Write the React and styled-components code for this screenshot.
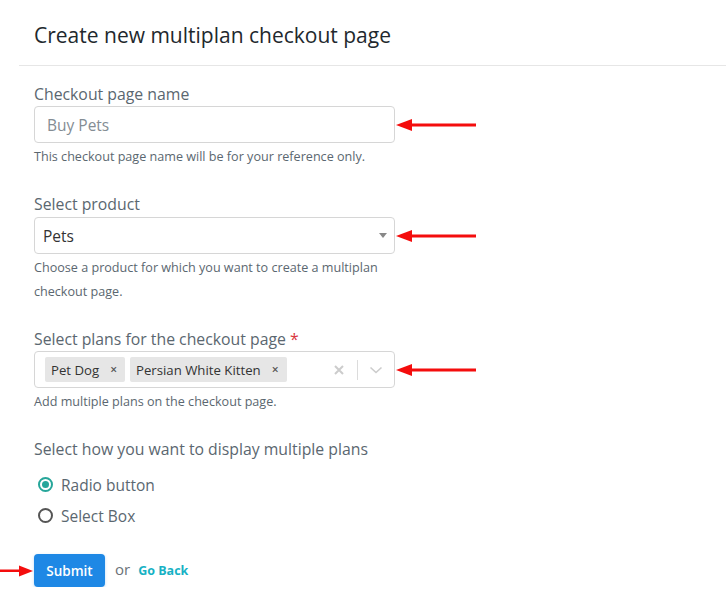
import React from 'react';
import styled, { createGlobalStyle } from 'styled-components';

const GlobalStyle = createGlobalStyle`
    body {
        margin: 0;
        background: #fff;
        font-family: 'Open Sans', 'Liberation Sans', sans-serif;
    }
`;

const Card = styled.div`
    margin-left: 19px;
    width: 707px;
`;

const Header = styled.div`
    padding: 21px 15px 16px;
    border-bottom: 1px solid #e6e6e6;
`;

const Title = styled.h2`
    margin: 0;
    font-size: 21px;
    line-height: 28px;
    font-weight: 400;
    color: #22282d;
`;

const Body = styled.div`
    padding: 17px 15px 0;
`;

const Group = styled.div`
    margin-bottom: ${(p) => p.$gap ?? 24}px;
`;

const Label = styled.div`
    font-size: 15.8px;
    line-height: 22px;
    color: #5b6770;
    margin-bottom: ${(p) => p.$mb ?? 1}px;
`;

const Star = styled.span`
    color: #d9363e;
`;

const Row = styled.div`
    display: flex;
    align-items: center;
    gap: 1px;
`;

const Input = styled.div`
    box-sizing: border-box;
    width: 361px;
    height: 37px;
    border: 1px solid #d6d6d6;
    border-radius: 4px;
    display: flex;
    align-items: center;
    padding: 0 12px 0 ${(p) => (p.$placeholder ? 12 : 8)}px;
    font-size: 15.5px;
    color: ${(p) => (p.$placeholder ? '#848d94' : '#333')};
`;

const Caret = styled.span`
    margin-left: auto;
    width: 0;
    height: 0;
    border-left: 4px solid transparent;
    border-right: 4px solid transparent;
    border-top: 5px solid #888;
    margin-right: -5px;
`;

const Help = styled.div`
    margin-top: 2px;
    font-size: 12.6px;
    line-height: 24px;
    color: #5b6770;
    max-width: 361px;
`;

const MultiBox = styled.div`
    box-sizing: border-box;
    width: 361px;
    height: 37px;
    border: 1px solid #d6d6d6;
    border-radius: 4px;
    display: flex;
    align-items: center;
    padding: 0 0 0 10px;
`;

const Tags = styled.div`
    display: flex;
    gap: 5px;
    flex: 1;
`;

const Tag = styled.div`
    display: flex;
    align-items: center;
    height: 25px;
    background: #e6e6e6;
    border-radius: 2px;
    font-size: 13.2px;
    color: #333;
    padding: 0 8px 0 6px;
    gap: 11px;
`;

const TagX = styled.span`
    font-size: 12px;
    color: #555;
    font-weight: 600;
`;

const Indicators = styled.div`
    display: flex;
    align-items: center;
    height: 100%;
`;

const IndicatorIcon = styled.div`
    width: 36px;
    display: flex;
    justify-content: center;
    align-items: center;
`;

const Separator = styled.span`
    width: 1px;
    height: 20px;
    background: #dcdcdc;
`;

const Radios = styled.div`
    margin-top: 9px;
    padding-left: 4px;
`;

const RadioRow = styled.label`
    display: flex;
    align-items: center;
    height: 31px;
    gap: 8px;
    font-size: 15.5px;
    color: #5b6770;
`;

const RadioDot = styled.span`
    box-sizing: border-box;
    width: 15px;
    height: 15px;
    border-radius: 50%;
    border: 2px solid ${(p) => (p.$checked ? '#26a69a' : '#555')};
    display: flex;
    align-items: center;
    justify-content: center;
    &::after {
        content: '';
        width: 7px;
        height: 7px;
        border-radius: 50%;
        background: ${(p) => (p.$checked ? '#26a69a' : 'transparent')};
    }
`;

const Actions = styled.div`
    display: flex;
    align-items: center;
    margin: 23px 0 0 -34px;
`;

const SubmitButton = styled.button`
    height: 33px;
    width: 71px;
    border: none;
    border-radius: 4px;
    background: #1e88e5;
    color: #fff;
    font-family: 'Open Sans', sans-serif;
    font-weight: 600;
    font-size: 13.5px;
    box-shadow: 0 1px 3px rgba(30, 136, 229, 0.3);
`;

const Or = styled.span`
    margin: 0 8px 0 10px;
    font-size: 15px;
    color: #6b7278;
    position: relative;
    top: -2px;
`;

const GoBack = styled.a`
    font-size: 12.5px;
    font-weight: 700;
    color: #16b1c4;
    text-decoration: none;
`;

const LeftArrow = () => (
    <svg width="80" height="14" viewBox="0 0 80 14">
        <polygon points="0,7 16,1 16,13" fill="#f40d0d" />
        <rect x="14" y="5.5" width="66" height="3" fill="#f40d0d" />
    </svg>
);

const RightArrow = () => (
    <svg width="34" height="14" viewBox="0 0 34 14">
        <rect x="0" y="5.5" width="21" height="2.5" fill="#f40d0d" />
        <polygon points="33,7 19,1.5 19,12.5" fill="#f40d0d" />
    </svg>
);

const ClearIcon = () => (
    <svg width="12" height="12" viewBox="0 0 12 12">
        <path d="M2 2 L10 10 M10 2 L2 10" stroke="#cccccc" strokeWidth="2" />
    </svg>
);

const ChevronIcon = () => (
    <svg width="14" height="10" viewBox="0 0 14 10">
        <path d="M1.5 2.5 L7 7.5 L12.5 2.5" stroke="#cccccc" strokeWidth="1.6" fill="none" />
    </svg>
);

const App = () => {
    return (
        <>
            <GlobalStyle />
            <Card>
                <Header>
                    <Title>Create new multiplan checkout page</Title>
                </Header>
                <Body>
                    <Group>
                        <Label>Checkout page name</Label>
                        <Row>
                            <Input $placeholder>Buy Pets</Input>
                            <LeftArrow />
                        </Row>
                        <Help>This checkout page name will be for your reference only.</Help>
                    </Group>
                    <Group>
                        <Label $mb={2}>Select product</Label>
                        <Row>
                            <Input>
                                Pets
                                <Caret />
                            </Input>
                            <LeftArrow />
                        </Row>
                        <Help>Choose a product for which you want to create a multiplan checkout page.</Help>
                    </Group>
                    <Group>
                        <Label>
                            Select plans for the checkout page <Star>*</Star>
                        </Label>
                        <Row>
                            <MultiBox>
                                <Tags>
                                    <Tag>
                                        Pet Dog <TagX>×</TagX>
                                    </Tag>
                                    <Tag>
                                        Persian White Kitten <TagX>×</TagX>
                                    </Tag>
                                </Tags>
                                <Indicators>
                                    <IndicatorIcon>
                                        <ClearIcon />
                                    </IndicatorIcon>
                                    <Separator />
                                    <IndicatorIcon>
                                        <ChevronIcon />
                                    </IndicatorIcon>
                                </Indicators>
                            </MultiBox>
                            <LeftArrow />
                        </Row>
                        <Help>Add multiple plans on the checkout page.</Help>
                    </Group>
                    <Group $gap={0}>
                        <Label>Select how you want to display multiple plans</Label>
                        <Radios>
                            <RadioRow>
                                <RadioDot $checked />
                                Radio button
                            </RadioRow>
                            <RadioRow>
                                <RadioDot />
                                Select Box
                            </RadioRow>
                        </Radios>
                    </Group>
                    <Actions>
                        <RightArrow />
                        <SubmitButton>Submit</SubmitButton>
                        <Or>or</Or>
                        <GoBack href="#">Go Back</GoBack>
                    </Actions>
                </Body>
            </Card>
        </>
    );
};

export default App;
